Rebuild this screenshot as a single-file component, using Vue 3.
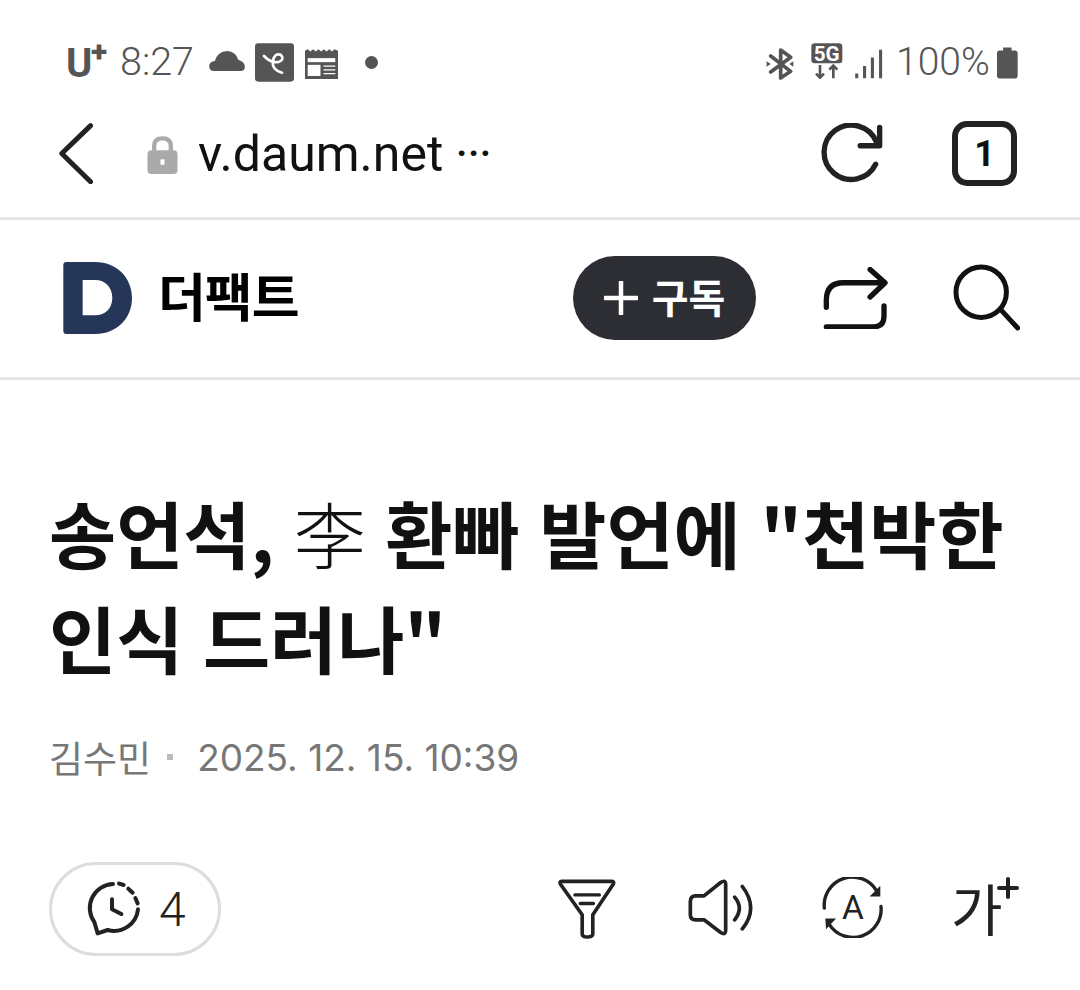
<script setup>
</script>

<template>
  <div class="page">
    <div class="status">
      <div class="status-left">
        <span class="carrier">U<sup class="plus">+</sup></span>
        <span class="time">8:27</span>
        <svg class="i-cloud" viewBox="508 92 107 60"><path fill="#555" d="M522 152Q508 152 508 138Q508 124 525 122Q533 94 562 92Q588 94 595 118Q615 124 615 140Q615 152 602 152Z"/></svg>
        <svg class="i-e" viewBox="645 70 117 115"><rect x="645" y="70" width="117" height="115" rx="10" fill="#555"/><path fill="none" stroke="#fff" stroke-width="8" stroke-linecap="round" d="M672 108Q695 132 718 125Q735 116 722 104Q704 98 698 124Q696 150 726 158"/></svg>
        <svg class="i-news" viewBox="795 80 98 92"><path fill="#555" d="M795 172V88L803 84 811 90 819 84 827 90 835 84 843 90 851 84 859 90 867 84 875 90 883 84 893 88V172Z"/><rect x="803" y="110" width="82" height="12" fill="#fff"/><rect x="803" y="130" width="38" height="33" fill="#fff"/><path stroke="#fff" stroke-width="4" d="M850 134H885M850 145H885M850 156H885"/></svg>
        <span class="dot"></span>
      </div>
      <div class="status-right">
        <svg class="i-bt" viewBox="78 78 84 96"><path fill="none" stroke="#555" stroke-width="11" stroke-linejoin="round" stroke-linecap="round" d="M92 102L152 148 122 168V84L152 106 92 150"/><path fill="#555" d="M80 118L92 126 80 134ZM160 118L148 126 160 134Z"/></svg>
        <svg class="i-5g" viewBox="212 66 94 108"><rect x="212" y="67" width="93" height="60" rx="10" fill="#555"/><text x="258" y="120" text-anchor="middle" class="t5g">5G</text><path fill="none" stroke="#555" stroke-width="8" d="M238 132V170M226 158L238 170 250 158M278 172V134M266 146L278 134 290 146"/></svg>
        <svg class="i-sig" viewBox="345 80 82 88"><path fill="none" stroke-width="9" stroke="#555" d="M350 152V166M373 130V166M396 105V166M420 82V166"/></svg>
        <span class="pct">100%</span>
        <svg class="i-bat" viewBox="772 76 62 92"><path fill="#555" d="M790 76H815V85H825Q833 85 833 93V160Q833 168 825 168H780Q772 168 772 160V93Q772 85 780 85H790Z"/></svg>
      </div>
    </div>

    <div class="urlbar">
      <svg class="i-back" viewBox="55 310 105 184"><path fill="none" stroke="#222" stroke-width="15" stroke-linecap="round" stroke-linejoin="round" d="M153 318L66 402 153 487"/></svg>
      <svg class="i-lock" viewBox="320 342 92 114"><path fill="none" stroke="#aaa" stroke-width="13" d="M341 390V372Q341 349 366 349Q391 349 391 372V390"/><rect x="321" y="385" width="90" height="71" rx="12" fill="#aaa"/><rect x="360" y="412" width="12" height="16" fill="#fff"/></svg>
      <span class="url">v.daum.net</span>
      <span class="more">···</span>
      <span class="grow"></span>
      <svg class="i-reload" viewBox="245 312 185 182"><path fill="none" stroke="#222" stroke-width="16" stroke-linecap="round" d="M408 435A81 81 0 1 1 410 368"/><path fill="none" stroke="#222" stroke-width="16" stroke-linecap="round" stroke-linejoin="round" d="M420 325V380H362"/></svg>
      <span class="tabs">1</span>
    </div>

    <div class="channel">
      <svg class="i-d" viewBox="68 66 207 216"><path fill="#253659" fill-rule="evenodd" d="M78 66H165C228 66 275 112 275 174C275 236 228 282 165 282H78Q69 282 69 273V75Q69 66 78 66ZM127 120V226H165C195 226 216 204 216 174C216 143 195 120 165 120Z"/></svg>
      <span class="name">더팩트</span>
      <span class="grow"></span>
      <button class="sub">
        <svg class="i-plus" viewBox="0 0 34 34"><path stroke="#fff" stroke-width="4.5" stroke-linecap="round" d="M17 1V33M1 17H33"/></svg>
        <span class="sub-label">구독</span>
      </button>
      <svg class="i-share" viewBox="788 78 196 186"><path fill="none" stroke="#111" stroke-width="16" stroke-linecap="round" stroke-linejoin="round" d="M798 199V178Q798 125 850 125H972M930 85L975 125 930 168M972 195V225Q972 258 940 258H798"/></svg>
      <svg class="i-search" viewBox="1180 72 202 202"><circle cx="1265" cy="157" r="76" fill="none" stroke="#111" stroke-width="15"/><path stroke="#111" stroke-width="15" stroke-linecap="round" d="M1326 212L1375 265"/></svg>
    </div>

    <article class="article">
      <h1 class="title">송언석, <span class="han">李</span> 환빠 발언에 "천박한<br>인식 드러나"</h1>
      <div class="meta">
        <span class="author">김수민</span>
        <span class="sep"></span>
        <span class="date">2025. 12. 15. 10:39</span>
      </div>
      <div class="tools">
        <button class="comments">
          <svg class="i-clock" viewBox="140 95 162 168"><path fill="none" stroke="#222" stroke-width="12" stroke-linecap="round" stroke-linejoin="round" d="M218 104A72 72 0 0 0 162 218L172 252 202 242A72 72 0 0 0 293 180M236 103L250 107M264 118L277 130M285 146L292 162"/><path fill="none" stroke="#222" stroke-width="12" stroke-linecap="round" stroke-linejoin="round" d="M215 150V180L243 194"/></svg>
          <span>4</span>
        </button>
        <span class="grow"></span>
        <svg class="i-filter" viewBox="55 55 175 185"><path fill="none" stroke="#222" stroke-width="11" stroke-linejoin="round" d="M66 64H218Q225 64 222 72L160 165V222Q160 232 143 232Q128 232 128 222V165L62 72Q59 64 66 64Z"/><path stroke="#222" stroke-width="10" stroke-linecap="round" d="M106 105H180M122 131H162"/></svg>
        <svg class="i-speaker" viewBox="442 58 198 170"><path fill="none" stroke="#222" stroke-width="11" stroke-linejoin="round" d="M449 125Q449 108 465 108H490L540 68Q555 58 555 75V210Q555 228 540 218L490 180H465Q449 180 449 165Z"/><path fill="none" stroke="#222" stroke-width="11" stroke-linecap="round" d="M582 112Q610 145 582 180M605 80Q655 145 605 207"/></svg>
        <svg class="i-tr" viewBox="846 52 182 182"><path fill="none" stroke="#222" stroke-width="10" stroke-linecap="round" d="M853 145A84 84 0 0 1 1008 92M1022 140A84 84 0 0 1 868 194"/><path fill="#222" d="M1020 78V110H988ZM856 176H888L858 208Z"/><text x="938" y="178" text-anchor="middle" class="ta">A</text></svg>
        <div class="i-text">
          <span class="ga">가</span>
          <svg class="ga-plus" viewBox="0 0 22 22"><path stroke="#222" stroke-width="4" stroke-linecap="round" d="M11 2V20M2 11H20"/></svg>
        </div>
      </div>
    </article>
  </div>
</template>

<style scoped>
.page {
  width: 1080px;
  height: 990px;
  overflow: hidden;
  background: #fff;
  color: #111;
  font-family: "Noto Sans CJK KR", "Noto Sans", sans-serif;
}
svg { display: block; flex: none; }
.grow { flex: 1; }

.status {
  height: 100px;
  box-sizing: border-box;
  padding: 42px 62px 0 66px;
  display: flex;
  justify-content: space-between;
  align-items: flex-start;
  color: #555;
  font-family: Roboto, sans-serif;
}
.status-left, .status-right { display: flex; align-items: center; height: 40px; }
.carrier { font-size: 40px; font-weight: 700; width: 54px; line-height: 40px; position: relative; top: 2px; }
.plus { font-size: 30px; font-weight: 900; position: absolute; left: 25px; top: -6px; line-height: 28px; }
.time { font-size: 39.5px; font-weight: 300; width: 89px; line-height: 40px; }
.i-cloud { width: 36px; height: 20px; margin-right: 10px; margin-top: -2px; }
.i-e { width: 39px; height: 39px; margin-right: 11px; }
.i-news { width: 33px; height: 31px; margin-top: 2px; }
.dot { width: 13px; height: 13px; border-radius: 50%; background: #555; margin-left: 27px; }

.i-bt { width: 28px; height: 32px; margin-right: 17px; margin-top: 3px; }
.i-5g { width: 32px; height: 36px; margin-right: 12px; margin-top: -3px; }
.i-sig { width: 28px; height: 30px; margin-right: 13px; margin-top: 3px; }
.pct { font-size: 39px; font-weight: 300; line-height: 40px; width: 101px; }
.i-bat { width: 21px; height: 32px; margin-top: 2px; }
.t5g { font: 700 62px Roboto, sans-serif; fill: #fff; }

.urlbar {
  height: 120px;
  box-sizing: border-box;
  display: flex;
  align-items: center;
  padding: 0 63px 10px 58px;
  border-bottom: 3px solid #e6e6e6;
}
.i-back { width: 35px; height: 61px; margin-right: 54px; }
.i-lock { width: 31px; height: 38px; margin-right: 20px; margin-top: 2px; }
.url { font: 400 50px Roboto, sans-serif; color: #111; }
.more { font: 700 36px Roboto, sans-serif; color: #111; margin-left: 13px; letter-spacing: 1px; }
.i-reload { width: 62px; height: 61px; margin-right: 69px; }
.tabs {
  width: 65px;
  height: 65px;
  box-sizing: border-box;
  border: 6px solid #222;
  border-radius: 15px;
  display: flex;
  align-items: center;
  justify-content: center;
  font: 700 36px Roboto, sans-serif;
  color: #111;
}

.channel {
  height: 160px;
  box-sizing: border-box;
  display: flex;
  align-items: center;
  padding: 0 60px 2px 63px;
  border-bottom: 3px solid #e6e6e6;
}
.i-d { width: 69px; height: 72px; margin-right: 26px; }
.name { font-size: 52px; font-weight: 700; color: #000; line-height: 60px; letter-spacing: -1px; margin-top: -6px; }
.sub {
  width: 183px;
  height: 84px;
  border: 0;
  border-radius: 42px;
  background: #2d2e33;
  color: #fff;
  display: flex;
  align-items: center;
  justify-content: center;
  gap: 14px;
  padding: 0;
  font: 700 40px "Noto Sans CJK KR", sans-serif;
  margin-right: 67px;
}
.sub-label { margin-top: -3px; }
.i-plus { width: 34px; height: 34px; }
.i-share { width: 65px; height: 62px; margin-right: 65px; }
.i-search { width: 67px; height: 67px; }

.article { padding: 0 60px 0 49px; }
.title {
  margin: 0;
  padding-top: 99px;
  font-size: 73px;
  font-weight: 700;
  line-height: 105px;
  word-spacing: 3px;
  color: #111;
  white-space: nowrap;
}
.han { font-weight: 300; font-size: 72px; }
.meta {
  display: flex;
  align-items: center;
  margin-top: 45px;
  height: 46px;
  color: #777;
  font-family: Inter, "Noto Sans CJK KR", sans-serif;
  font-size: 37px;
}
.author { font-family: "Noto Sans CJK KR", sans-serif; font-size: 37px; }
.sep { width: 6px; height: 6px; background: #bbb; margin: 0 24px 0 16px; }
.tools { display: flex; align-items: center; margin-top: 82px; height: 94px; }
.comments {
  width: 172px;
  height: 94px;
  box-sizing: border-box;
  border: 3px solid #ddd;
  border-radius: 47px;
  background: #fff;
  display: flex;
  align-items: center;
  padding: 0 0 0 35px;
  gap: 18px;
  color: #222;
  font: 300 48px Roboto, sans-serif;
}
.i-clock { width: 54px; height: 56px; }
.i-filter { width: 58px; height: 62px; margin-right: 72px; margin-top: -1px; }
.i-speaker { width: 66px; height: 57px; margin-right: 68px; margin-top: -4px; }
.i-tr { width: 61px; height: 61px; margin-right: 71px; margin-top: -3px; }
.ta { font: 400 100px Roboto, sans-serif; fill: #222; }
.i-text { width: 66px; height: 62px; position: relative; top: -2px; }
.ga { font-size: 56px; font-weight: 400; color: #222; line-height: 62px; position: absolute; left: -3px; top: 0; }
.ga-plus { width: 22px; height: 22px; position: absolute; right: 1px; top: 1px; }
</style>
